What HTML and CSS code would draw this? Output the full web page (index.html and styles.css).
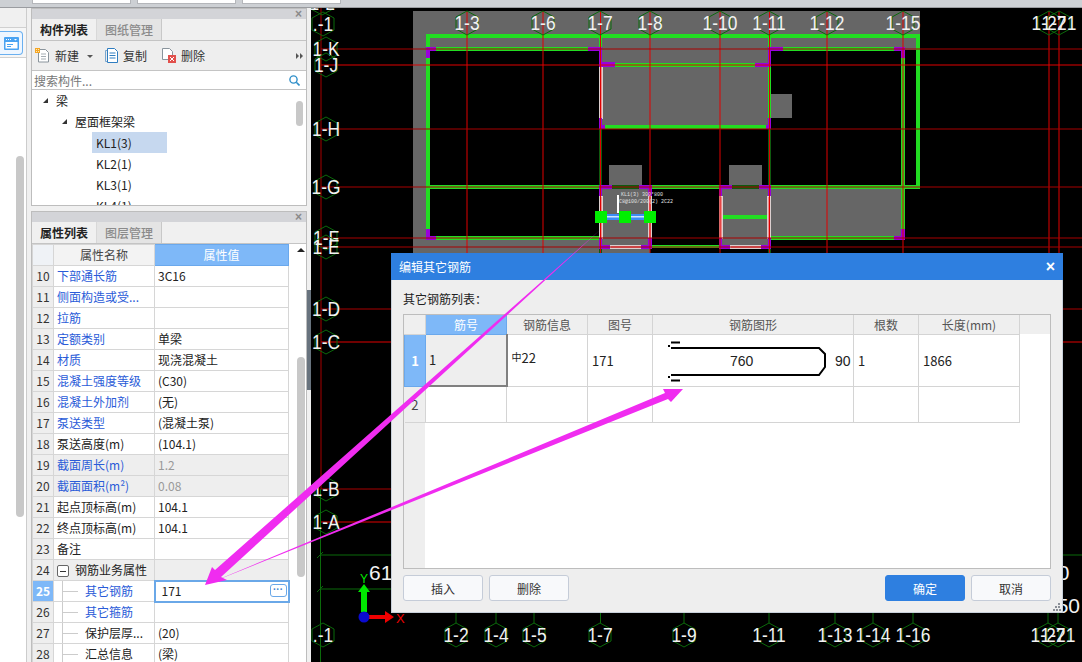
FILE: index.html
```html
<!DOCTYPE html>
<html>
<head>
    <title>编辑其它钢筋</title>
    <link rel="stylesheet" href="styles.css">
</head>
<body>
<div class="app">
    <div class="topbar">
        <div class="top-tab"></div>
        <div class="top-tab"></div>
        <div class="top-tab"></div>
    </div>
    <div class="main">
        <!-- narrow strip on the far left -->
        <div class="rail">
            <div class="rail-top"></div>
            <div class="rail-tools">
                <div class="rail-btn">
                    <svg width="15" height="13" viewBox="0 0 15 13">
                        <rect width="15" height="13" rx="1" fill="#4aa3f2"/>
                        <rect x="1.500" y="5" width="12" height="6.500" fill="#fff"/>
                        <path d="M2 2h1v1H2zM4 2h1v1H4zM6 2h1v1H6zM10 2h3l-1.500 1.500z" fill="#fff"/>
                        <path d="M3 7h6v1H3zM3 9h4v1H3z" fill="#4aa3f2"/>
                    </svg>
                </div>
            </div>
            <div class="rail-thumb"></div>
        </div>

        <div class="side">
            <div class="panels">
                <!-- component list -->
                <div class="panel panel-list">
                    <div class="panel-head"><span class="panel-close">×</span></div>
                    <div class="tabs">
                        <div class="tab active">构件列表</div>
                        <div class="tab">图纸管理</div>
                    </div>
                    <div class="toolbar">
                        <span class="tool">
                            <svg width="15" height="15" viewBox="0 0 15 15">
                                <path d="M3.500 1.500h7l3 3v9.500h-10z" fill="#fff" stroke="#8a949c"/>
                                <path d="M6 6h5M6 8.500h5M6 11h5" stroke="#a5adb3"/>
                                <rect x="0" y="0" width="5" height="5" fill="#f5a623"/>
                                <path d="M1 1h1v1H1zM3 3h1v1H3zM3 1h1v1H3zM1 3h1v1H1z" fill="#ffe9b8"/>
                            </svg>
                            新建
                        </span>
                        <span class="caret"></span>
                        <span class="tool">
                            <svg width="13" height="15" viewBox="0 0 13 15">
                                <path d="M.5 2.500h2M.5 2.500v11h2" fill="none" stroke="#7aa7cf"/>
                                <path d="M2.500.5h7l3 3v11h-10z" fill="#fff" stroke="#2f7dc0"/>
                                <path d="M4.500 5h6M4.500 7.500h6M4.500 10h6" stroke="#2f7dc0"/>
                            </svg>
                            复制
                        </span>
                        <span class="tool">
                            <svg width="14" height="15" viewBox="0 0 14 15">
                                <path d="M.5.5h7l3 3v8h-10z" fill="#fff" stroke="#8a949c"/>
                                <rect x="6" y="7" width="8" height="8" fill="#e2504c"/>
                                <path d="M8 9l4 4M12 9l-4 4" stroke="#fff"/>
                            </svg>
                            删除
                        </span>
                        <span class="more"><i></i><i></i></span>
                    </div>
                    <div class="search">
                        <span class="search-text">搜索构件...</span>
                        <svg width="11" height="11" viewBox="0 0 11 11">
                            <circle cx="4.500" cy="4.500" r="3.600" fill="none" stroke="#2f8fc9" stroke-width="1.400"/>
                            <path d="M7.300 7.300L10.500 10.500" stroke="#2f8fc9" stroke-width="1.600"/>
                        </svg>
                    </div>
                    <div class="tree-body">
                        <div class="tree">
                            <div class="tree-row level-1"><span class="twist"></span>梁</div>
                            <div class="tree-row level-2"><span class="twist"></span>屋面框架梁</div>
                            <div class="tree-row level-3"><span class="leaf selected">KL1(3)</span></div>
                            <div class="tree-row level-3"><span class="leaf">KL2(1)</span></div>
                            <div class="tree-row level-3"><span class="leaf">KL3(1)</span></div>
                            <div class="tree-row level-3"><span class="leaf">KL4(1)</span></div>
                        </div>
                        <div class="scroll-track tree-track"><div class="thumb tree-thumb"></div></div>
                    </div>
                </div>

                <!-- property list -->
                <div class="panel panel-props">
                    <div class="panel-head"><span class="panel-close">×</span></div>
                    <div class="tabs">
                        <div class="tab active">属性列表</div>
                        <div class="tab">图层管理</div>
                    </div>
                    <div class="props-body">
                        <table class="prop-table">
                            <colgroup><col class="c-num"><col class="c-name"><col class="c-val"></colgroup>
                            <tr class="head-row"><th></th><th>属性名称</th><th class="hl">属性值</th></tr>
                            <tr><td class="num">10</td><td class="link">下部通长筋</td><td>3C16</td></tr>
                            <tr><td class="num">11</td><td class="link">侧面构造或受...</td><td></td></tr>
                            <tr><td class="num">12</td><td class="link">拉筋</td><td></td></tr>
                            <tr><td class="num">13</td><td class="link">定额类别</td><td>单梁</td></tr>
                            <tr><td class="num">14</td><td class="link">材质</td><td>现浇混凝土</td></tr>
                            <tr><td class="num">15</td><td class="link">混凝土强度等级</td><td>(C30)</td></tr>
                            <tr><td class="num">16</td><td class="link">混凝土外加剂</td><td>(无)</td></tr>
                            <tr><td class="num">17</td><td class="link">泵送类型</td><td>(混凝土泵)</td></tr>
                            <tr><td class="num">18</td><td>泵送高度(m)</td><td>(104.1)</td></tr>
                            <tr class="locked"><td class="num">19</td><td class="link">截面周长(m)</td><td>1.2</td></tr>
                            <tr class="locked"><td class="num">20</td><td class="link">截面面积(m²)</td><td>0.08</td></tr>
                            <tr><td class="num">21</td><td>起点顶标高(m)</td><td>104.1</td></tr>
                            <tr><td class="num">22</td><td>终点顶标高(m)</td><td>104.1</td></tr>
                            <tr><td class="num">23</td><td>备注</td><td></td></tr>
                            <tr class="group"><td class="num">24</td><td><span class="minus"></span>钢筋业务属性</td><td></td></tr>
                            <tr><td class="num cur">25</td><td class="link child">其它钢筋</td><td class="editing">171<span class="dots">···</span></td></tr>
                            <tr><td class="num">26</td><td class="link child">其它箍筋</td><td></td></tr>
                            <tr><td class="num">27</td><td class="child">保护层厚...</td><td>(20)</td></tr>
                            <tr><td class="num">28</td><td class="child">汇总信息</td><td>(梁)</td></tr>
                        </table>
                        <div class="scroll-track prop-track">
                            <div class="arrow-up"></div>
                            <div class="thumb prop-thumb"></div>
                        </div>
                    </div>
                </div>
            </div>
            <div class="gutter"><div class="gutter-bar"></div></div>
        </div>

        <!-- drawing area: the plan is a free canvas, coordinates are page pixels -->
        <div class="canvas">
            <svg class="plan" width="771" height="654" viewBox="311 8 771 654">
                <defs>
                    <polygon id="hex" points="0,-12 11,-6 11,6 0,12 -11,6 -11,-6"/>
                </defs>

                <g fill="#666">
                    <rect x="413" y="11" width="507" height="39"/>
                    <rect x="413" y="50" width="16" height="203"/>
                    <rect x="429" y="239" width="171" height="14"/>
                    <rect x="602" y="50" width="168" height="77"/>
                    <rect x="602" y="189" width="48" height="64"/>
                    <rect x="721" y="189" width="49" height="56"/>
                    <rect x="770" y="189" width="134" height="47"/>
                    <rect x="609" y="165" width="33" height="21"/>
                    <rect x="729" y="165" width="33" height="21"/>
                    <rect x="771" y="94" width="21" height="24"/>
                </g>

                <g fill="#22dd22">
                    <rect x="426" y="34" width="494" height="4"/>
                    <rect x="426" y="38" width="4" height="192"/>
                    <rect x="916" y="34" width="4" height="155"/>
                    <rect x="426" y="185" width="494" height="4"/>
                    <rect x="436" y="47" width="152" height="4"/>
                    <rect x="783" y="47" width="111" height="4"/>
                    <rect x="615" y="63" width="140" height="4"/>
                    <rect x="605" y="125" width="161" height="4"/>
                    <rect x="436" y="236" width="164" height="4"/>
                    <rect x="771" y="236" width="123" height="4"/>
                    <rect x="901" y="50" width="4" height="180"/>
                    <rect x="768" y="50" width="3" height="70"/>
                    <rect x="652" y="245" width="68" height="3"/>
                    <rect x="722" y="215" width="47" height="4"/>
                    <rect x="599" y="38" width="3" height="10"/>
                    <rect x="768" y="38" width="3" height="10"/>
                </g>
                <g fill="#0f5a0f">
                    <rect x="599" y="129" width="3" height="57"/>
                    <rect x="768" y="129" width="3" height="57"/>
                    <rect x="599" y="249" width="3" height="5"/>
                    <rect x="768" y="249" width="3" height="5"/>
                    <rect x="612" y="185" width="27" height="4"/>
                    <rect x="732" y="185" width="27" height="4"/>
                </g>

                <g fill="#ee8a8a" stroke="#dccfcf" stroke-width="1">
                    <rect x="599.500" y="66.500" width="3" height="52"/>
                    <rect x="599.500" y="196.500" width="3" height="42"/>
                    <rect x="648.500" y="196.500" width="3" height="42"/>
                    <rect x="719.500" y="196.500" width="3" height="42"/>
                    <rect x="767.500" y="196.500" width="3" height="42"/>
                    <rect x="610.500" y="245.500" width="31" height="3"/>
                    <rect x="730.500" y="245.500" width="31" height="3"/>
                </g>

                <path fill="#9900dd" d="M426 47h10v4h-6v7h-4z
                    M588 47h14v15h13v5h-16v-16h-11z
                    M599 118h3v7h3v4h-6z
                    M599 185h13v4h-10v7h-3z
                    M639 185h13v11h-4v-7h-9z
                    M426 229h4v7h6v4h-10z
                    M599 238h3v7h8v4h-11z
                    M648 238h4v11h-11v-4h7z
                    M719 185h13v4h-10v7h-3z
                    M759 185h12v11h-3v-7h-9z
                    M719 238h3v7h8v4h-11z
                    M768 238h3v11h-10v-4h7z
                    M768 47h15v4h-12v16h-16v-4h13z
                    M766 125h2v-7h3v11h-5z
                    M894 47h11v11h-4v-7h-7z
                    M901 229h4v11h-11v-4h7z"/>

                <g class="grid-red">
                    <path d="M467 11V253M543 11V253M600.500 11V253M650 11V253M720 11V253M769.500 11V253M827 11V253M903 11V253M1049 11V253M1059 11V253"/>
                    <path d="M321 65H1082M321 342H1082M321 522H391"/>
                </g>
                <g class="grid-dark">
                    <path d="M321 8V489M321 49H1082M321 129H1082M321 187H1082M321 238H1082M321 247H1082M321 309H1082M321 489H391"/>
                </g>

                <g class="grid-green">
                    <path d="M320.500 489V662M320 555H391M320 589H391M1052 555H1082"/>
                    <path d="M317 558l6-6M317 592l6-6"/>
                    <path d="M456 612V623M496 612V623M534 612V623M600.500 612V623M684 612V623M769 612V623M835 612V623M873 612V623M913 612V623M1048 612V623M1058 612V623"/>
                </g>

                <!-- selected beam -->
                <rect x="617" y="195" width="2" height="18" fill="#fff"/>
                <text class="tiny" x="621" y="196">KL1(3) 300*800</text>
                <text class="tiny" x="619" y="203">C8@100/200(2) 2C22</text>
                <rect x="607" y="214" width="37" height="6" fill="#3b8df5"/>
                <rect x="607" y="216" width="37" height="1.500" fill="#cfe4ff"/>
                <g fill="#00f000">
                    <rect x="595" y="211" width="12" height="12"/>
                    <rect x="619" y="211" width="12" height="12"/>
                    <rect x="644" y="211" width="12" height="12"/>
                </g>

                <!-- axis bubbles -->
                <g class="axis">
                    <g transform="translate(467 23)"><use href="#hex"/><text y="7">1-3</text></g>
                    <g transform="translate(543 23)"><use href="#hex"/><text y="7">1-6</text></g>
                    <g transform="translate(600 23)"><use href="#hex"/><text y="7">1-7</text></g>
                    <g transform="translate(650 23)"><use href="#hex"/><text y="7">1-8</text></g>
                    <g transform="translate(720 23)"><use href="#hex"/><text y="7">1-10</text></g>
                    <g transform="translate(769 23)"><use href="#hex"/><text y="7">1-11</text></g>
                    <g transform="translate(827 23)"><use href="#hex"/><text y="7">1-12</text></g>
                    <g transform="translate(903 23)"><use href="#hex"/><text y="7">1-15</text></g>
                    <g transform="translate(1049 23)"><use href="#hex"/><text y="7">1-27</text></g>
                    <g transform="translate(1059 23)"><use href="#hex"/><text y="7">1-21</text></g>

                    <g transform="translate(322 3)"><use href="#hex"/><text y="7">1-L</text></g>
                    <g transform="translate(323 24)"><use href="#hex"/><text y="7">.-1</text></g>
                    <g transform="translate(326 49)"><use href="#hex"/><text y="7">1-K</text></g>
                    <g transform="translate(326 65)"><use href="#hex"/><text y="7">1-J</text></g>
                    <g transform="translate(326 129)"><use href="#hex"/><text y="7">1-H</text></g>
                    <g transform="translate(326 187)"><use href="#hex"/><text y="7">1-G</text></g>
                    <g transform="translate(326 238)"><use href="#hex"/><text y="7">1-F</text></g>
                    <g transform="translate(326 247)"><use href="#hex"/><text y="7">1-E</text></g>
                    <g transform="translate(326 309)"><use href="#hex"/><text y="7">1-D</text></g>
                    <g transform="translate(326 342)"><use href="#hex"/><text y="7">1-C</text></g>
                    <g transform="translate(326 489)"><use href="#hex"/><text y="7">1-B</text></g>
                    <g transform="translate(326 522)"><use href="#hex"/><text y="7">1-A</text></g>

                    <g transform="translate(323 635)"><use href="#hex"/><text y="7">.-1</text></g>
                    <g transform="translate(456 635)"><use href="#hex"/><text y="7">1-2</text></g>
                    <g transform="translate(496 635)"><use href="#hex"/><text y="7">1-4</text></g>
                    <g transform="translate(534 635)"><use href="#hex"/><text y="7">1-5</text></g>
                    <g transform="translate(600 635)"><use href="#hex"/><text y="7">1-7</text></g>
                    <g transform="translate(684 635)"><use href="#hex"/><text y="7">1-9</text></g>
                    <g transform="translate(769 635)"><use href="#hex"/><text y="7">1-11</text></g>
                    <g transform="translate(835 635)"><use href="#hex"/><text y="7">1-13</text></g>
                    <g transform="translate(873 635)"><use href="#hex"/><text y="7">1-14</text></g>
                    <g transform="translate(913 635)"><use href="#hex"/><text y="7">1-16</text></g>
                    <g transform="translate(1048 635)"><use href="#hex"/><text y="7">1-27</text></g>
                    <g transform="translate(1058 635)"><use href="#hex"/><text y="7">1-21</text></g>
                </g>

                <text class="dim" x="369" y="580">610</text>
                <text class="dim" x="1046" y="580">50</text>
                <text class="dim" x="1045" y="613">650</text>

                <!-- coordinate marker -->
                <path d="M361 612V592H358L364 584L370 592H367V612z" fill="#00e800"/>
                <text class="axis-y" x="364" y="583">Y</text>
                <path d="M369 615H385V611L394 617L385 623V619H369z" fill="#f00000"/>
                <circle cx="364" cy="617" r="5.500" fill="#0a0ad0"/>
                <text class="axis-x" x="396" y="623">X</text>
            </svg>

            <div class="dialog">
                <div class="dialog-title">
                    <span>编辑其它钢筋</span>
                    <span class="dialog-close">×</span>
                </div>
                <div class="dialog-body">
                    <div class="list-label">其它钢筋列表：</div>
                    <div class="grid-wrap">
                        <table class="rebar-table">
                            <colgroup>
                                <col class="r-num"><col class="r-no"><col class="r-info"><col class="r-fig">
                                <col class="r-shape"><col class="r-count"><col class="r-len"><col>
                            </colgroup>
                            <tr class="rebar-head">
                                <th></th><th class="hl">筋号</th><th>钢筋信息</th><th>图号</th>
                                <th>钢筋图形</th><th>根数</th><th>长度(mm)</th><th class="filler"></th>
                            </tr>
                            <tr class="row-one">
                                <td class="rownum cur">1</td>
                                <td class="cell-active">1</td>
                                <td class="cell-info"><span class="bar-mark">中</span>22</td>
                                <td>171</td>
                                <td class="cell-shape">
                                    <svg class="shape" width="200" height="51" viewBox="0 0 200 51">
                                        <path d="M18 13H166L172 19V32L166 40H18" fill="none" stroke="#000" stroke-width="2"/>
                                        <path d="M15 10h2v2h-2zM15 41h2v2h-2z" fill="#000"/>
                                        <path d="M18 7.500H27M18 45.500H27" stroke="#000" stroke-width="2"/>
                                        <text x="77" y="31">760</text>
                                        <text x="182" y="31">90</text>
                                    </svg>
                                </td>
                                <td>1</td>
                                <td>1866</td>
                                <td class="filler"></td>
                            </tr>
                            <tr class="row-two">
                                <td class="rownum">2</td><td></td><td></td><td></td><td></td><td></td><td></td>
                                <td class="filler"></td>
                            </tr>
                        </table>
                    </div>
                    <div class="dialog-foot">
                        <button class="btn">插入</button>
                        <button class="btn">删除</button>
                        <button class="btn primary push">确定</button>
                        <button class="btn">取消</button>
                    </div>
                </div>
                <svg class="grip" width="8" height="8" viewBox="0 0 8 8">
                    <path d="M5 0h2v2H5zM2 3h2v2H2zM5 3h2v2H5zM0 6h2v2H0zM3 6h2v2H3zM6 6h2v2H6z" fill="#8a8f96"/>
                </svg>
            </div>
        </div>
    </div>

    <!-- annotation arrows drawn over everything -->
    <svg class="arrows" width="1082" height="662" viewBox="0 0 1082 662">
        <polygon points="600,230 221,577 227,580 205,585 212,567 215,570"/>
        <polygon points="205,585 665,393 663,389 683,389 671,402 668,399"/>
    </svg>
</div>
</body>
</html>
```

FILE: styles.css
```css
* { box-sizing: border-box; }
html, body { margin: 0; padding: 0; height: 100%; overflow: hidden; }
body { font-family: "Noto Sans CJK SC", "Liberation Sans", sans-serif; font-size: 12px; color: #222; }

.app { position: relative; width: 1082px; height: 662px; overflow: hidden; background: #f0f0f0; }
.topbar { display: flex; gap: 6px; height: 8px; padding-left: 32px; background: #cdd0d4; border-bottom: 1px solid #9a9ca0; }
.top-tab { width: 99px; height: 4px; background: #fff; border: 1px solid #b4b6ba; border-top: 0; }
.main { display: flex; height: 654px; }

/* left rail */
.rail { width: 27px; background: #fff; border-right: 1px solid #ccc; }
.rail-top { height: 20px; background: #f0f0f0; border-bottom: 1px solid #d0d0d0; }
.rail-tools { height: 30px; padding-top: 3px; background: #f6f6f6; border-bottom: 1px solid #d0d0d0; }
.rail-btn { display: flex; align-items: center; justify-content: center; width: 23px; height: 24px; background: #eef6ff; border: 1px solid #6ab0f0; border-left: 0; border-radius: 0 4px 4px 0; }
.rail-thumb { width: 8px; height: 361px; margin: 98px 0 0 16px; background: #c8c8c8; border-radius: 4px; }

/* side panels */
.side { display: flex; width: 284px; padding-left: 4px; }
.panels { display: flex; flex-direction: column; gap: 5px; width: 276px; }
.gutter { width: 4px; }
.gutter-bar { width: 4px; height: 100px; margin-top: 282px; background: #68737e; }
.panel { display: flex; flex-direction: column; background: #fff; border: 1px solid #bdbdbd; overflow: hidden; }
.panel-list { height: 198px; }
.panel-props { flex: 1; border-bottom: 0; }
.panel-head { height: 10px; flex: none; background: #d3d4d8; text-align: right; }
.panel-close { display: block; padding-right: 4px; font: bold 12px/10px "Liberation Sans", sans-serif; color: #8a8a8a; }
.tabs { display: flex; flex: none; height: 22px; background: #f0f0f0; border-bottom: 1px solid #c4c4c4; }
.tab { width: 65px; line-height: 21px; text-align: center; color: #8b8b8b; background: #e4e4e4; border-right: 1px solid #c8c8c8; font-weight: 500; }
.tab.active { width: 65px; color: #222; background: #f0f0f0; font-weight: 700; border-right: 1px solid #d8d8d8; }

.toolbar { display: flex; flex: none; align-items: center; height: 30px; padding-left: 3px; background: #eeeeee; border-bottom: 1px solid #c4c4c4; color: #333; }
.tool { display: flex; align-items: center; gap: 5px; margin-right: 15px; }
.caret { width: 0; height: 0; margin: 2px 12px 0 -7px; border: 3px solid transparent; border-top: 3px solid #555; border-bottom: 0; }
.more { display: flex; gap: 1px; margin-left: auto; margin-right: 3px; }
.more i { width: 0; height: 0; border: 3px solid transparent; border-left: 3px solid #555; border-right: 0; }

.search { display: flex; flex: none; align-items: center; justify-content: space-between; height: 19px; padding: 0 6px 0 2px; border-bottom: 1px solid #c4c4c4; }
.search-text { color: #777; }

.tree-body { display: flex; flex: 1; overflow: hidden; }
.tree { flex: 1; }
.tree-row { display: flex; align-items: center; height: 21px; color: #222; }
.level-1 { padding-left: 11px; }
.level-2 { padding-left: 30px; }
.level-3 { padding-left: 60px; }
.twist { width: 0; height: 0; margin-right: 8px; border-style: solid; border-width: 0 0 5px 5px; border-color: transparent transparent #333 transparent; }
.leaf { display: block; width: 75px; height: 21px; padding-left: 4px; line-height: 21px; }
.leaf.selected { background: #c6d8ef; }
.tree-track { width: 10px; flex: none; }
.thumb { background: #c8c8c8; border-radius: 4px; }
.tree-thumb { width: 7px; height: 25px; margin-top: 11px; }

/* property table */
.props-body { display: flex; flex: 1; overflow: hidden; }
.prop-table { width: 256px; flex: none; border-collapse: collapse; table-layout: fixed; }
.c-num { width: 21px; }
.c-name { width: 101px; }
.c-val { width: 134px; }
.prop-table th, .prop-table td { height: 21px; padding: 0 3px; border: 1px solid #d6d6d6; white-space: nowrap; overflow: hidden; text-align: left; font-weight: 400; line-height: 18px; }
.prop-table th { height: 21px; padding: 0; text-align: center; background: #f3f3f3; color: #444; }
.prop-table th:first-child { background: #eff2f6; }
.prop-table th.hl, .rebar-table th.hl { background: #7eb8f8; color: #fff; border: 1px solid #6aa8ec; }
.prop-table td.num { padding: 0; text-align: center; background: #eeeeee; color: #333; }
.prop-table td.num.cur { background: #7eb8f8; color: #fff; font-weight: 700; }
.prop-table .link { color: #2a5bd8; }
.locked td { background: #eeeeee; color: #999; }
.group td { background: #eeeeee; }
.minus { display: inline-block; width: 12px; height: 12px; margin: 0 6px 0 0; vertical-align: -2px; border: 1px solid #666; border-radius: 2px; background: linear-gradient(#333, #333) center / 6px 1px no-repeat #fff; }
.prop-table td.child {
    padding-left: 31px;
    background-image: linear-gradient(#ccc, #ccc), linear-gradient(#ccc, #ccc);
    background-size: 1px 100%, 15px 1px;
    background-position: 8px 0, 9px center;
    background-repeat: no-repeat;
}
.prop-table td.editing { position: relative; padding-left: 6px; border: 2px solid #6aa8e8; }
.dots { position: absolute; right: 1px; top: 2px; width: 17px; height: 13px; border: 1px solid #6aa8e8; border-radius: 3px; background: #fff; color: #3f85d0; font: bold 10px/10px "Liberation Sans", sans-serif; text-align: center; }
.prop-track { width: 18px; flex: none; padding-left: 7px; }
.arrow-up { width: 0; height: 0; margin: 4px 0 0 0; border: 4px solid transparent; border-bottom: 4px solid #222; border-top: 0; }
.prop-thumb { width: 8px; height: 220px; margin-top: 105px; }

/* drawing */
.canvas { position: relative; flex: 1; background: #000; overflow: hidden; }
.plan { display: block; }
.grid-red path { fill: none; stroke: #e00000; stroke-width: 1; }
.grid-dark path { fill: none; stroke: #a80000; stroke-width: 1; }
.grid-green path { fill: none; stroke: #0b6a0b; stroke-width: 1; }
.axis use { fill: none; stroke: #0b6a0b; stroke-width: 1; }
.axis text { font-family: "Liberation Sans", sans-serif; font-size: 20px; fill: #f2f2f2; text-anchor: middle; transform: scaleX(.87); }
.dim { font-family: "Liberation Sans", sans-serif; font-size: 21px; fill: #f2f2f2; }
.tiny { font-family: "Liberation Mono", monospace; font-size: 5px; fill: #e0e0e0; }
.axis-y { font-family: "Liberation Sans", sans-serif; font-size: 12px; fill: #00e800; text-anchor: middle; }
.axis-x { font-family: "Liberation Sans", sans-serif; font-size: 13px; fill: #f00000; }

/* dialog */
.dialog { position: absolute; left: 80px; top: 245px; display: flex; flex-direction: column; width: 672px; height: 360px; background: #eeeeee; border: 1px solid #c8d0da; border-top: 0; }
.dialog-title { display: flex; flex: none; align-items: center; justify-content: space-between; height: 27px; margin: 0 -1px; padding: 0 8px; background: #2e7fe0; color: #fff; }
.dialog-close { font: bold 16px/16px "Liberation Sans", sans-serif; }
.dialog-body { display: flex; flex: 1; flex-direction: column; padding: 0 11px; }
.list-label { height: 34px; padding-top: 10px; line-height: 18px; color: #222; }
.grid-wrap { height: 255px; border: 1px solid #bdbdbd; background: linear-gradient(to right, #eeeeee 21px, #fff 21px); overflow: hidden; }
.rebar-table { width: 100%; border-collapse: collapse; table-layout: fixed; font-size: 13px; }
.r-num { width: 21px; }
.r-no { width: 81px; }
.r-info { width: 81px; }
.r-fig { width: 65px; }
.r-shape { width: 201px; }
.r-count { width: 65px; }
.r-len { width: 101px; }
.rebar-table th, .rebar-table td { padding: 0 4px; border: 1px solid #d4d4d4; font-weight: 400; white-space: nowrap; }
.rebar-table th { height: 19px; padding: 0; background: #efefef; color: #555; text-align: center; font-size: 12px; }
.rebar-table td { background: #fff; }
.rebar-table th:first-child, .rebar-table td:first-child { border-left: 0; }
.rebar-table tr:first-child th { border-top: 0; }
.rebar-table .filler { border: 0; }
.rebar-table th.filler { background: #efefef; border-bottom: 0; }
.rebar-table td.filler { background: #fff; }
.row-one td { height: 52px; }
.row-two td { height: 36px; }
.rebar-table .rownum { padding: 0; background: #eeeeee; text-align: center; color: #444; }
.rebar-table .rownum.cur { background: #7eb8f8; color: #fff; font-weight: 700; border: 1px solid #6aa8ec; }
.rebar-table .cell-active { padding-left: 3px; background: #eeeeee; border-right: 2px solid #808080; border-bottom: 2px solid #808080; }
.rebar-table .cell-info { padding: 0 0 6px 4px; }
.bar-mark { font-size: 10px; vertical-align: 2px; }
.rebar-table .cell-shape { padding: 0; }
.shape { display: block; }
.shape text { font-family: "Liberation Sans", sans-serif; font-size: 14px; fill: #222; }
.dialog-foot { display: flex; gap: 6px; padding-top: 6px; }
.btn { width: 80px; height: 26px; padding: 0; font: inherit; color: #333; background: #f8f9fb; border: 1px solid #c5ccd8; border-radius: 3px; }
.btn.primary { color: #fff; background: #2e7fe0; border-color: #2e7fe0; }
.btn.push { margin-left: auto; }
.grip { position: absolute; right: 1px; bottom: 1px; }

.arrows { position: absolute; left: 0; top: 0; pointer-events: none; }
.arrows polygon { fill: #f02cf0; }
```
